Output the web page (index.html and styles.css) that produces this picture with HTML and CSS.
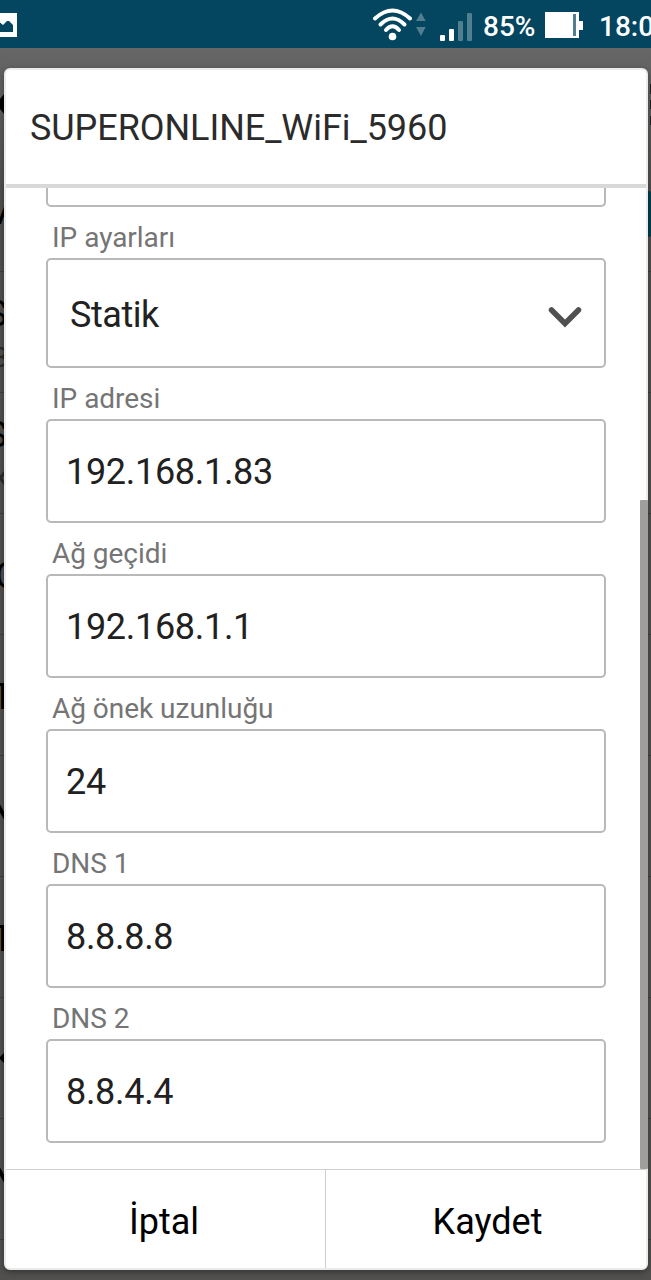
FILE: index.html
```
<!DOCTYPE html>
<html lang="tr">
<head>
<meta charset="utf-8">
<title>SUPERONLINE_WiFi_5960</title>
<link rel="stylesheet" href="styles.css">
</head>
<body>
<div class="screen">
  <svg class="backdrop" width="651" height="1232" viewBox="0 48 651 1232" aria-hidden="true">
    <path d="M0 271.500H651M0 392.500H651M0 513.500H651M0 634.500H651M0 755.500H651M0 876.500H651M0 997.500H651M0 1118.500H651M0 1239.500H651" stroke="#3f3f3f"/>
    <path d="M5 93L-4 104L5 115Z"/>
    <path d="M650 84h1v10h-1zM650 100h1v9h-1zM650 116h1v9h-1z" fill="#222"/>
    <rect x="560" y="191" width="92" height="46" rx="4" fill="#023e50"/>
    <g font-size="36">
      <text x="-3" y="224">A</text>
      <text x="-14" y="326">S</text>
      <text x="-14" y="447">S</text>
      <text x="-5" y="588">C</text>
      <text x="-8" y="709">T</text>
      <text x="-8" y="951">T</text>
    </g>
    <g font-size="28" fill="#292929">
      <text x="-9" y="367">B</text>
    </g>
    <path d="M6 471L0 478L6 485" fill="none" stroke="#292929" stroke-width="3"/>
    <path d="M-2 805L6 819M-2 1168L6 1182" stroke="#000" stroke-width="4"/>
    <path d="M5 1052L-1 1058L5 1064Z"/>
  </svg>
  <header class="status">
    <svg class="photo" width="17" height="24" viewBox="0 0 17 24"><path d="M0 0H17V24H0Z" fill="#fff"/><path d="M-2 8L3 12L7 8H9L13 12V19H-2Z" fill="#04465f"/></svg>
    <svg class="wifi" width="54" height="36" viewBox="372 6 54 36">
      <g fill="none" stroke="#fff" stroke-width="4" stroke-linecap="round"><path d="M375 18.500Q392.500 2.500 410 18.500"/><path d="M380.500 24.500Q392.500 12.500 404.500 24.500"/><path d="M386 30Q392.500 22.500 399 30"/></g>
      <circle cx="392.500" cy="36.500" r="3.800" fill="#fff"/>
      <path d="M421 12.500L425.700 21H416ZM416 27H425.700L421 36Z" fill="#527f90"/>
    </svg>
    <svg class="signal" width="33" height="28" viewBox="0 0 33 28"><rect y="22" width="5" height="6" rx="1" fill="#fff"/><rect x="9" y="16" width="5" height="12" rx="1" fill="#fff"/><rect x="18" y="8" width="5" height="20" rx="1" fill="#527f90"/><rect x="27" width="5" height="28" rx="1" fill="#527f90"/></svg>
    <span class="percent">85%</span>
    <svg class="battery" width="38" height="26" viewBox="0 0 38 26"><path d="M0 0H34V9H38V18H34V26H0Z" fill="#fff"/><path d="M28 2h3v22h-3z" fill="#527f90"/></svg>
    <span class="clock">18:05</span>
  </header>
  <main class="dialog">
    <h1 class="title">SUPERONLINE_WiFi_5960</h1>
    <div class="body">
      <div class="stub"></div>
      <div class="label">IP ayarları</div>
      <div class="field select"><span>Statik</span><svg width="34" height="22" viewBox="0 0 34 22"><path d="M3.500 4L17 17.500L30.500 4" fill="none" stroke="#505050" stroke-width="5.500" stroke-linecap="round" stroke-linejoin="miter"/></svg></div>
      <div class="label">IP adresi</div>
      <div class="field">192.168.1.83</div>
      <div class="label">Ağ geçidi</div>
      <div class="field">192.168.1.1</div>
      <div class="label">Ağ önek uzunluğu</div>
      <div class="field">24</div>
      <div class="label">DNS 1</div>
      <div class="field">8.8.8.8</div>
      <div class="label">DNS 2</div>
      <div class="field">8.8.4.4</div>
      <div class="thumb"></div>
    </div>
    <footer class="actions"><div class="action">İptal</div><div class="action">Kaydet</div></footer>
  </main>
</div>
</body>
</html>
```
FILE: styles.css
```
* { box-sizing: border-box; }
body { margin: 0; font-family: Roboto, "Noto Sans", sans-serif; }
.screen {
  position: relative;
  width: 651px;
  height: 1280px;
  overflow: hidden;
  background: linear-gradient(#666 48px, #60605f 90px, #51504e 190px, #51504e 100%);
}
.backdrop { position: absolute; left: 0; top: 48px; }
.status {
  position: relative;
  display: flex;
  height: 48px;
  background: #04465f;
  color: #fff;
  font-size: 28px;
  font-weight: 500;
  line-height: 54px;
  white-space: nowrap;
}
.status > * { flex: none; }
.photo { margin-top: 13px; }
.wifi { margin: 6px 0 0 355px; }
.signal { margin: 13px 0 0 14px; }
.percent { width: 62px; padding-left: 10px; }
.battery { margin-top: 12px; margin-left: 10px; }
.clock { margin-left: 16px; }
.dialog {
  position: relative;
  display: flex;
  flex-direction: column;
  width: 644px;
  height: 1202px;
  margin: 20px 0 0 4px;
  background: #fff;
  border: 2px solid #ebebeb;
  border-radius: 6px;
  box-shadow: 0 2px 6px rgba(0, 0, 0, .35);
}
.title {
  flex: none;
  height: 118px;
  margin: 0;
  padding-left: 24px;
  border-bottom: 4px solid #d9d9d9;
  color: #2b2b2b;
  font-size: 36px;
  font-weight: 400;
  letter-spacing: -.06px;
  line-height: 117px;
}
.body { position: relative; flex: none; height: 981px; padding: 0 40px; }
.stub { height: 19px; border: 2px solid #b9b9b9; border-top: 0; border-radius: 0 0 5px 5px; }
.label { height: 51px; padding-left: 6px; color: #757575; font-size: 28px; letter-spacing: -.03px; line-height: 61px; }
.field {
  height: 104px;
  padding-left: 18px;
  border: 2px solid #b9b9b9;
  border-radius: 5px;
  color: #212121;
  font-size: 36px;
  letter-spacing: -.3px;
  line-height: 103px;
}
.select {
  display: flex;
  align-items: center;
  justify-content: space-between;
  height: 110px;
  padding: 0 22.5px 0 22px;
  letter-spacing: -.45px;
  line-height: 106px;
}
.select span { padding-top: 4px; }
.select svg { margin-top: 7px; }
.thumb { position: absolute; right: -2px; top: 312px; width: 8px; height: 669px; background: #9e9e9e; border-radius: 1px; }
.actions { display: grid; grid-template: 98px / 320px 1fr; flex: none; border-top: 1px solid #cfcfcf; }
.action { color: #000; font-size: 36px; line-height: 104px; text-align: center; }
.action:first-child { padding-right: 3px; border-right: 1px solid #cfcfcf; }
.action:last-child { padding-left: 3px; }
```
